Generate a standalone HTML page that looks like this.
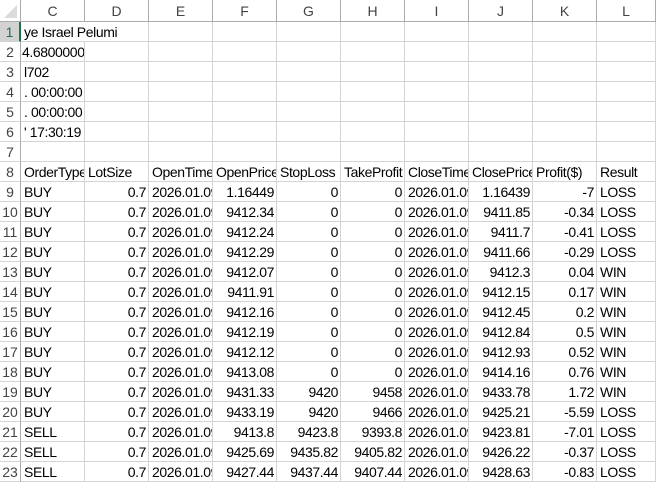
<!DOCTYPE html>
<html><head><meta charset="utf-8"><style>
html,body{margin:0;padding:0;background:#fff;width:656px;height:484px;overflow:hidden}
.g{display:grid;grid-template-columns:21px repeat(9,64px) 59px;grid-template-rows:22px repeat(23,20px);font-family:"Liberation Sans",sans-serif;font-size:14px;letter-spacing:-0.4px;color:#000}
.g>div{box-sizing:border-box;border-right:1px solid #d4d4d4;border-bottom:1px solid #d4d4d4;white-space:nowrap;overflow:hidden;padding:2px 2px 0 3px;line-height:17px}
.g>div.h{text-align:center;color:#444;border-right-color:#ababab;border-bottom-color:#ababab;padding:3px 0 0;font-size:14px;letter-spacing:0}
.g>div.r{text-align:center;color:#444;border-right-color:#ababab;padding:2px 0 0;font-size:14px;letter-spacing:0}
.g>div.n{text-align:right;padding-right:2px}
.g>div.o{overflow:visible;border-right:none;position:relative;z-index:2}
.corner{position:relative}
.corner:after{content:"";position:absolute;right:3px;bottom:3px;border-left:13px solid transparent;border-bottom:13px solid #dcdcdc}
.sel{background:#d2d2d2;border-right:2px solid #217346 !important;color:#217346 !important}
</style></head><body>
<div class="g">
<div class="h corner"></div><div class="h">C</div><div class="h">D</div><div class="h">E</div><div class="h">F</div><div class="h">G</div><div class="h">H</div><div class="h">I</div><div class="h">J</div><div class="h">K</div><div class="h">L</div>

<div class="r sel">1</div><div class="o">ye Israel Pelumi</div><div></div><div></div><div></div><div></div><div></div><div></div><div></div><div></div><div></div>
<div class="r">2</div><div style="padding-left:1px">4.68000000</div><div></div><div></div><div></div><div></div><div></div><div></div><div></div><div></div><div></div>
<div class="r">3</div><div>l702</div><div></div><div></div><div></div><div></div><div></div><div></div><div></div><div></div><div></div>
<div class="r">4</div><div>. 00:00:00</div><div></div><div></div><div></div><div></div><div></div><div></div><div></div><div></div><div></div>
<div class="r">5</div><div>. 00:00:00</div><div></div><div></div><div></div><div></div><div></div><div></div><div></div><div></div><div></div>
<div class="r">6</div><div>' 17:30:19</div><div></div><div></div><div></div><div></div><div></div><div></div><div></div><div></div><div></div>
<div class="r">7</div><div></div><div></div><div></div><div></div><div></div><div></div><div></div><div></div><div></div><div></div>
<div class="r">8</div><div>OrderType</div><div>LotSize</div><div>OpenTime</div><div>OpenPrice</div><div>StopLoss</div><div>TakeProfit</div><div>CloseTime</div><div>ClosePrice</div><div>Profit($)</div><div>Result</div>

<div class="r">9</div><div>BUY</div><div class="n">0.7</div><div>2026.01.09</div><div class="n">1.16449</div><div class="n">0</div><div class="n">0</div><div>2026.01.09</div><div class="n">1.16439</div><div class="n">-7</div><div>LOSS</div>
<div class="r">10</div><div>BUY</div><div class="n">0.7</div><div>2026.01.09</div><div class="n">9412.34</div><div class="n">0</div><div class="n">0</div><div>2026.01.09</div><div class="n">9411.85</div><div class="n">-0.34</div><div>LOSS</div>
<div class="r">11</div><div>BUY</div><div class="n">0.7</div><div>2026.01.09</div><div class="n">9412.24</div><div class="n">0</div><div class="n">0</div><div>2026.01.09</div><div class="n">9411.7</div><div class="n">-0.41</div><div>LOSS</div>
<div class="r">12</div><div>BUY</div><div class="n">0.7</div><div>2026.01.09</div><div class="n">9412.29</div><div class="n">0</div><div class="n">0</div><div>2026.01.09</div><div class="n">9411.66</div><div class="n">-0.29</div><div>LOSS</div>
<div class="r">13</div><div>BUY</div><div class="n">0.7</div><div>2026.01.09</div><div class="n">9412.07</div><div class="n">0</div><div class="n">0</div><div>2026.01.09</div><div class="n">9412.3</div><div class="n">0.04</div><div>WIN</div>
<div class="r">14</div><div>BUY</div><div class="n">0.7</div><div>2026.01.09</div><div class="n">9411.91</div><div class="n">0</div><div class="n">0</div><div>2026.01.09</div><div class="n">9412.15</div><div class="n">0.17</div><div>WIN</div>
<div class="r">15</div><div>BUY</div><div class="n">0.7</div><div>2026.01.09</div><div class="n">9412.16</div><div class="n">0</div><div class="n">0</div><div>2026.01.09</div><div class="n">9412.45</div><div class="n">0.2</div><div>WIN</div>
<div class="r">16</div><div>BUY</div><div class="n">0.7</div><div>2026.01.09</div><div class="n">9412.19</div><div class="n">0</div><div class="n">0</div><div>2026.01.09</div><div class="n">9412.84</div><div class="n">0.5</div><div>WIN</div>
<div class="r">17</div><div>BUY</div><div class="n">0.7</div><div>2026.01.09</div><div class="n">9412.12</div><div class="n">0</div><div class="n">0</div><div>2026.01.09</div><div class="n">9412.93</div><div class="n">0.52</div><div>WIN</div>
<div class="r">18</div><div>BUY</div><div class="n">0.7</div><div>2026.01.09</div><div class="n">9413.08</div><div class="n">0</div><div class="n">0</div><div>2026.01.09</div><div class="n">9414.16</div><div class="n">0.76</div><div>WIN</div>
<div class="r">19</div><div>BUY</div><div class="n">0.7</div><div>2026.01.09</div><div class="n">9431.33</div><div class="n">9420</div><div class="n">9458</div><div>2026.01.09</div><div class="n">9433.78</div><div class="n">1.72</div><div>WIN</div>
<div class="r">20</div><div>BUY</div><div class="n">0.7</div><div>2026.01.09</div><div class="n">9433.19</div><div class="n">9420</div><div class="n">9466</div><div>2026.01.09</div><div class="n">9425.21</div><div class="n">-5.59</div><div>LOSS</div>
<div class="r">21</div><div>SELL</div><div class="n">0.7</div><div>2026.01.09</div><div class="n">9413.8</div><div class="n">9423.8</div><div class="n">9393.8</div><div>2026.01.09</div><div class="n">9423.81</div><div class="n">-7.01</div><div>LOSS</div>
<div class="r">22</div><div>SELL</div><div class="n">0.7</div><div>2026.01.09</div><div class="n">9425.69</div><div class="n">9435.82</div><div class="n">9405.82</div><div>2026.01.09</div><div class="n">9426.22</div><div class="n">-0.37</div><div>LOSS</div>
<div class="r">23</div><div>SELL</div><div class="n">0.7</div><div>2026.01.09</div><div class="n">9427.44</div><div class="n">9437.44</div><div class="n">9407.44</div><div>2026.01.09</div><div class="n">9428.63</div><div class="n">-0.83</div><div>LOSS</div>
</div>
</body></html>
